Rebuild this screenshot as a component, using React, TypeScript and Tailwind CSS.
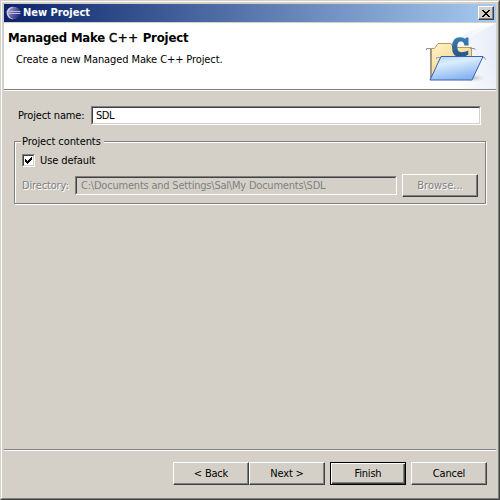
import React from "react";

const raised = "border border-t-white border-l-white border-r-[#404040] border-b-[#404040] shadow-[inset_-1px_-1px_0_#808080]";
const sunken = "border border-t-[#808080] border-l-[#808080] border-r-white border-b-white";

function Button({ children, className = "" }: { children: React.ReactNode; className?: string }) {
  return (
    <button className={`flex h-[23px] w-[76px] shrink-0 items-center justify-center bg-[#d4d0c8] ${className}`}>
      {children}
    </button>
  );
}

function EclipseIcon() {
  return (
    <svg className="ml-[2px] h-4 w-4 shrink-0" viewBox="0 0 16 16">
      <defs>
        <linearGradient id="orb" x1="0" y1="0" x2="1" y2="0.6">
          <stop offset="0" stopColor="#b9b0da" />
          <stop offset="0.5" stopColor="#665fa2" />
          <stop offset="1" stopColor="#2b2b74" />
        </linearGradient>
      </defs>
      <circle cx="6.8" cy="8" r="6.2" fill="#d3c9dc" />
      <circle cx="8.4" cy="8" r="6.1" fill="url(#orb)" />
      <path d="M3 6.5h11.5M3 8.5h11.5" stroke="#b4bce8" strokeWidth="1" />
    </svg>
  );
}

function FolderBanner() {
  return (
    <svg className="h-[66px] w-[76px]" viewBox="420 23 76 66">
      <defs>
        <linearGradient id="sky" x1="0" y1="0.7" x2="1" y2="0.3">
          <stop offset="0.3" stopColor="#ffffff" />
          <stop offset="1" stopColor="#e3e9f8" />
        </linearGradient>
        <linearGradient id="arc" x1="0" y1="0" x2="1" y2="1">
          <stop offset="0" stopColor="#e9eefb" />
          <stop offset="0.7" stopColor="#ffffff" stopOpacity="0" />
        </linearGradient>
        <linearGradient id="manila" x1="0" y1="0" x2="0.6" y2="1">
          <stop offset="0" stopColor="#fff3c6" />
          <stop offset="1" stopColor="#f0cf86" />
        </linearGradient>
        <linearGradient id="front" x1="0" y1="0" x2="0.4" y2="1">
          <stop offset="0" stopColor="#a9cdf6" />
          <stop offset="0.35" stopColor="#dceeff" />
          <stop offset="1" stopColor="#8ab6ef" />
        </linearGradient>
        <linearGradient id="letter" x1="0" y1="0" x2="0" y2="1">
          <stop offset="0" stopColor="#3f7fb4" />
          <stop offset="1" stopColor="#245580" />
        </linearGradient>
        <radialGradient id="shade">
          <stop offset="0" stopColor="#9b8f96" stopOpacity="0.55" />
          <stop offset="1" stopColor="#ffffff" stopOpacity="0" />
        </radialGradient>
      </defs>
      <path d="M496 23V89H420Q440 50 496 23Z" fill="url(#sky)" />
      <path d="M462 36Q476 26 496 24V84Q478 72 462 36Z" fill="url(#arc)" />
      <ellipse cx="474" cy="78" rx="14" ry="5" fill="url(#shade)" />
      <path d="M431.5 79V48.5h3l3.500-5h13l2 4h18.500v24z" fill="url(#manila)" stroke="#b69a5c" />
      <path d="M426.500 50v-1.500h5M470 48.500h4.500l1 1.500M430.500 49v30" stroke="#8f959f" fill="none" />
      <path d="M436.500 59v-1.500h4.500v8" stroke="#9da3aa" fill="none" />
      <path
        d="M468.500 37.500V45.500H464.500Q463.800 41.600 461 41.600Q457.300 41.600 457.300 47Q457.300 52.200 461.500 52.200Q465 52.200 468.300 50.500V54.500Q465 57 460.500 57Q452 57 452 47.200Q452 37.300 460 37.300Q463 37.300 465 38.700L466 37.500Z"
        fill="url(#letter)"
      />
      <path d="M441 56.500h42l-11 23.500h-42z" fill="url(#front)" stroke="#3d5fb8" />
      <path d="M483 57.500h1.500l1 2" stroke="#8f959f" fill="none" />
    </svg>
  );
}

export default function App() {
  return (
    <div className="h-[500px] w-[500px] border border-t-[#d4d0c8] border-l-[#d4d0c8] border-r-[#404040] border-b-[#404040] bg-[#d4d0c8] font-['DejaVu_Sans_Condensed','DejaVu_Sans',sans-serif] text-[11px] leading-[14px] text-black [font-stretch:condensed]">
      <div className="flex h-[498px] flex-col border border-t-white border-l-white border-r-[#808080] border-b-[#808080] p-[2px]">
        <header className="flex h-[18px] shrink-0 items-center bg-linear-to-r/srgb from-[#0a246a] to-[#a6caf0] text-white">
          <EclipseIcon />
          <span className="ml-px font-bold tracking-[-0.02px] whitespace-nowrap">New Project</span>
          <button className={`mr-[2px] ml-auto flex h-[14px] w-4 items-center justify-center bg-[#d4d0c8] ${raised}`}>
            <svg className="mr-px h-[7px] w-2" viewBox="0 0 8 7" shapeRendering="crispEdges">
              <path d="M0 0h2v1h1v1h2v-1h1v-1h2v1h-1v1h-1v1h-1v1h1v1h1v1h1v1h-2v-1h-1v-1h-2v1h-1v1h-2v-1h1v-1h1v-1h1v-1h-1v-1h-1v-1h-1z" />
            </svg>
          </button>
        </header>
        <section className="mt-px flex h-[66px] shrink-0 justify-between bg-white">
          <div className="pt-[7px] pl-1 whitespace-nowrap">
            <h1 className="text-[13px] leading-4 font-bold tracking-[-0.2px]">
              Managed Make <span className="font-normal tracking-[0.7px] [-webkit-text-stroke:0.4px_black]">C++</span>
              <span className="tracking-[-0.15px]"> Project</span>
            </h1>
            <p className="mt-[7px] ml-[8px] tracking-[-0.1px]">Create a new Managed Make C++ Project.</p>
          </div>
          <FolderBanner />
        </section>
        <div className="h-[2px] shrink-0 border-t border-b border-t-[#808080] border-b-white" />
        <main className="flex h-[358px] shrink-0 flex-col pt-[15px] pr-[10px] pl-[10px]">
          <div className="flex h-[19px] items-center pr-[5px] pl-1 whitespace-nowrap">
            <label className="w-[73px] tracking-[-0.15px]">Project name:</label>
            <div className={`h-[19px] flex-1 ${sunken}`}>
              <div className="flex h-[17px] items-center border border-t-[#404040] border-l-[#404040] border-r-[#d4d0c8] border-b-[#d4d0c8] bg-white pl-[3px] tracking-[-0.5px]">SDL</div>
            </div>
          </div>
          <fieldset className="mt-[16px] h-[63px] border border-[#808080] shadow-[1px_1px_0_white,inset_1px_1px_0_white]">
            <div className="-mt-[7px] ml-[6px] w-[83px] bg-[#d4d0c8] pl-px tracking-[-0.08px] whitespace-nowrap">Project contents</div>
            <label className="mt-[5px] ml-[7px] flex h-[13px] items-center">
              <span className={`h-[13px] w-[13px] ${sunken}`}>
                <span className="block h-[11px] w-[11px] border border-t-[#404040] border-l-[#404040] border-r-[#d4d0c8] border-b-[#d4d0c8] bg-white">
                  <svg className="h-[9px] w-[9px]" viewBox="0 0 9 9" shapeRendering="crispEdges">
                    <path d="M1 3h1v1h1v1h1v-1h1v-1h1v-1h1v-1h1v3h-1v1h-1v1h-1v1h-1v1h-1v-1h-1v-1h-1z" />
                  </svg>
                </span>
              </span>
              <span className="ml-[5px] tracking-[-0.1px]">Use default</span>
            </label>
            <div className="mt-[7px] flex h-[23px] items-center pl-[7px] whitespace-nowrap text-[#808080]">
              <span className="w-[53px] tracking-[-0.15px] [text-shadow:1px_1px_0_white]">Directory:</span>
              <div className={`h-[19px] w-[322px] ${sunken}`}>
                <div className="flex h-[17px] items-center border border-t-[#404040] border-l-[#404040] border-r-[#d4d0c8] border-b-[#d4d0c8] pl-1 tracking-[-0.21px]">C:\Documents and Settings\Sal\My Documents\SDL</div>
              </div>
              <Button className={`ml-[5px] [text-shadow:1px_1px_0_white] ${raised}`}>Browse...</Button>
            </div>
          </fieldset>
        </main>
        <div className="h-[2px] shrink-0 border-t border-b border-t-[#808080] border-b-white" />
        <footer className="flex justify-end pt-[11px] pr-[9px] tracking-[-0.2px] whitespace-nowrap">
          <Button className={raised}>&lt; Back</Button>
          <Button className={raised}>Next &gt;</Button>
          <Button className="ml-[5px] border border-black shadow-[inset_1px_1px_0_white,inset_-1px_-1px_0_#404040,inset_-2px_-2px_0_#808080]">Finish</Button>
          <Button className={`ml-[5px] ${raised}`}>Cancel</Button>
        </footer>
      </div>
    </div>
  );
}
